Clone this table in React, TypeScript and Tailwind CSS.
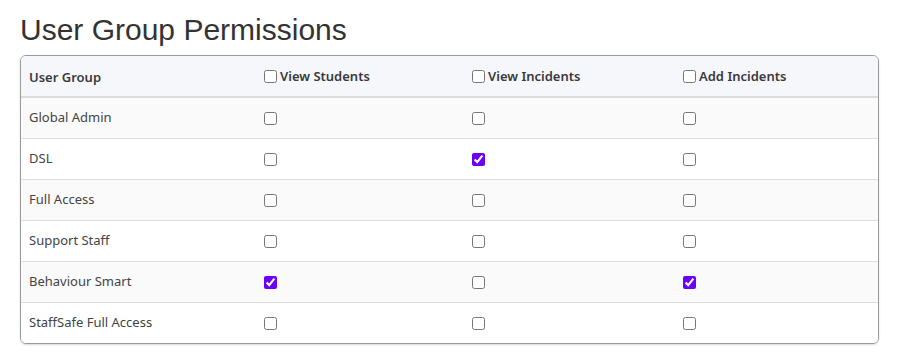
import React from 'react';

const permissions = ['View Students', 'View Incidents', 'Add Incidents'];

const groups = [
  { name: 'Global Admin', values: [false, false, false] },
  { name: 'DSL', values: [false, true, false] },
  { name: 'Full Access', values: [false, false, false] },
  { name: 'Support Staff', values: [false, false, false] },
  { name: 'Behaviour Smart', values: [true, false, true] },
  { name: 'StaffSafe Full Access', values: [false, false, false] },
];

function Box({ checked }: { checked: boolean }) {
  return (
    <input
      type="checkbox"
      defaultChecked={checked}
      className="w-[13px] h-[13px] m-0 align-middle accent-[#6a00f4]"
    />
  );
}

export default function App() {
  return (
    <div className="bg-white min-h-[361px] pl-5 pr-[21px] pt-[11px] font-['Noto_Sans',sans-serif]">
      <h1 className="font-['Liberation_Sans',Arial,sans-serif] text-[30px] leading-[38px] text-[#333] mb-[6px]">
        User Group Permissions
      </h1>

      <div className="border border-[#9a9a9a] rounded-[6px] overflow-hidden shadow-[0_1px_2px_rgba(0,0,0,0.15)]">
        <table className="w-full table-fixed border-collapse text-[13px] text-[#444]">
          <colgroup>
            <col className="w-[235px]" />
            <col className="w-[208px]" />
            <col className="w-[211px]" />
            <col />
          </colgroup>
          <thead>
            <tr className="bg-[#f5f7fa] border-b-2 border-[#dcdcdc] h-[41px]">
              <th className="text-left font-semibold px-2 pt-[4px] text-[#3a3a3a]">User Group</th>
              {permissions.map((p) => (
                <th key={p} className="text-left font-semibold px-2 pt-[4px] text-[#3a3a3a]">
                  <label className="inline-flex items-center gap-[3px]">
                    <Box checked={false} />
                    {p}
                  </label>
                </th>
              ))}
            </tr>
          </thead>
          <tbody>
            {groups.map((g, i) => (
              <tr
                key={g.name}
                className={`h-[41px] ${i > 0 ? 'border-t border-[#dedede]' : ''} ${i % 2 === 0 ? 'bg-[#fafafa]' : 'bg-white'}`}
              >
                <td className="px-2">{g.name}</td>
                {g.values.map((v, j) => (
                  <td key={j} className="px-2">
                    <Box checked={v} />
                  </td>
                ))}
              </tr>
            ))}
          </tbody>
        </table>
      </div>
    </div>
  );
}
